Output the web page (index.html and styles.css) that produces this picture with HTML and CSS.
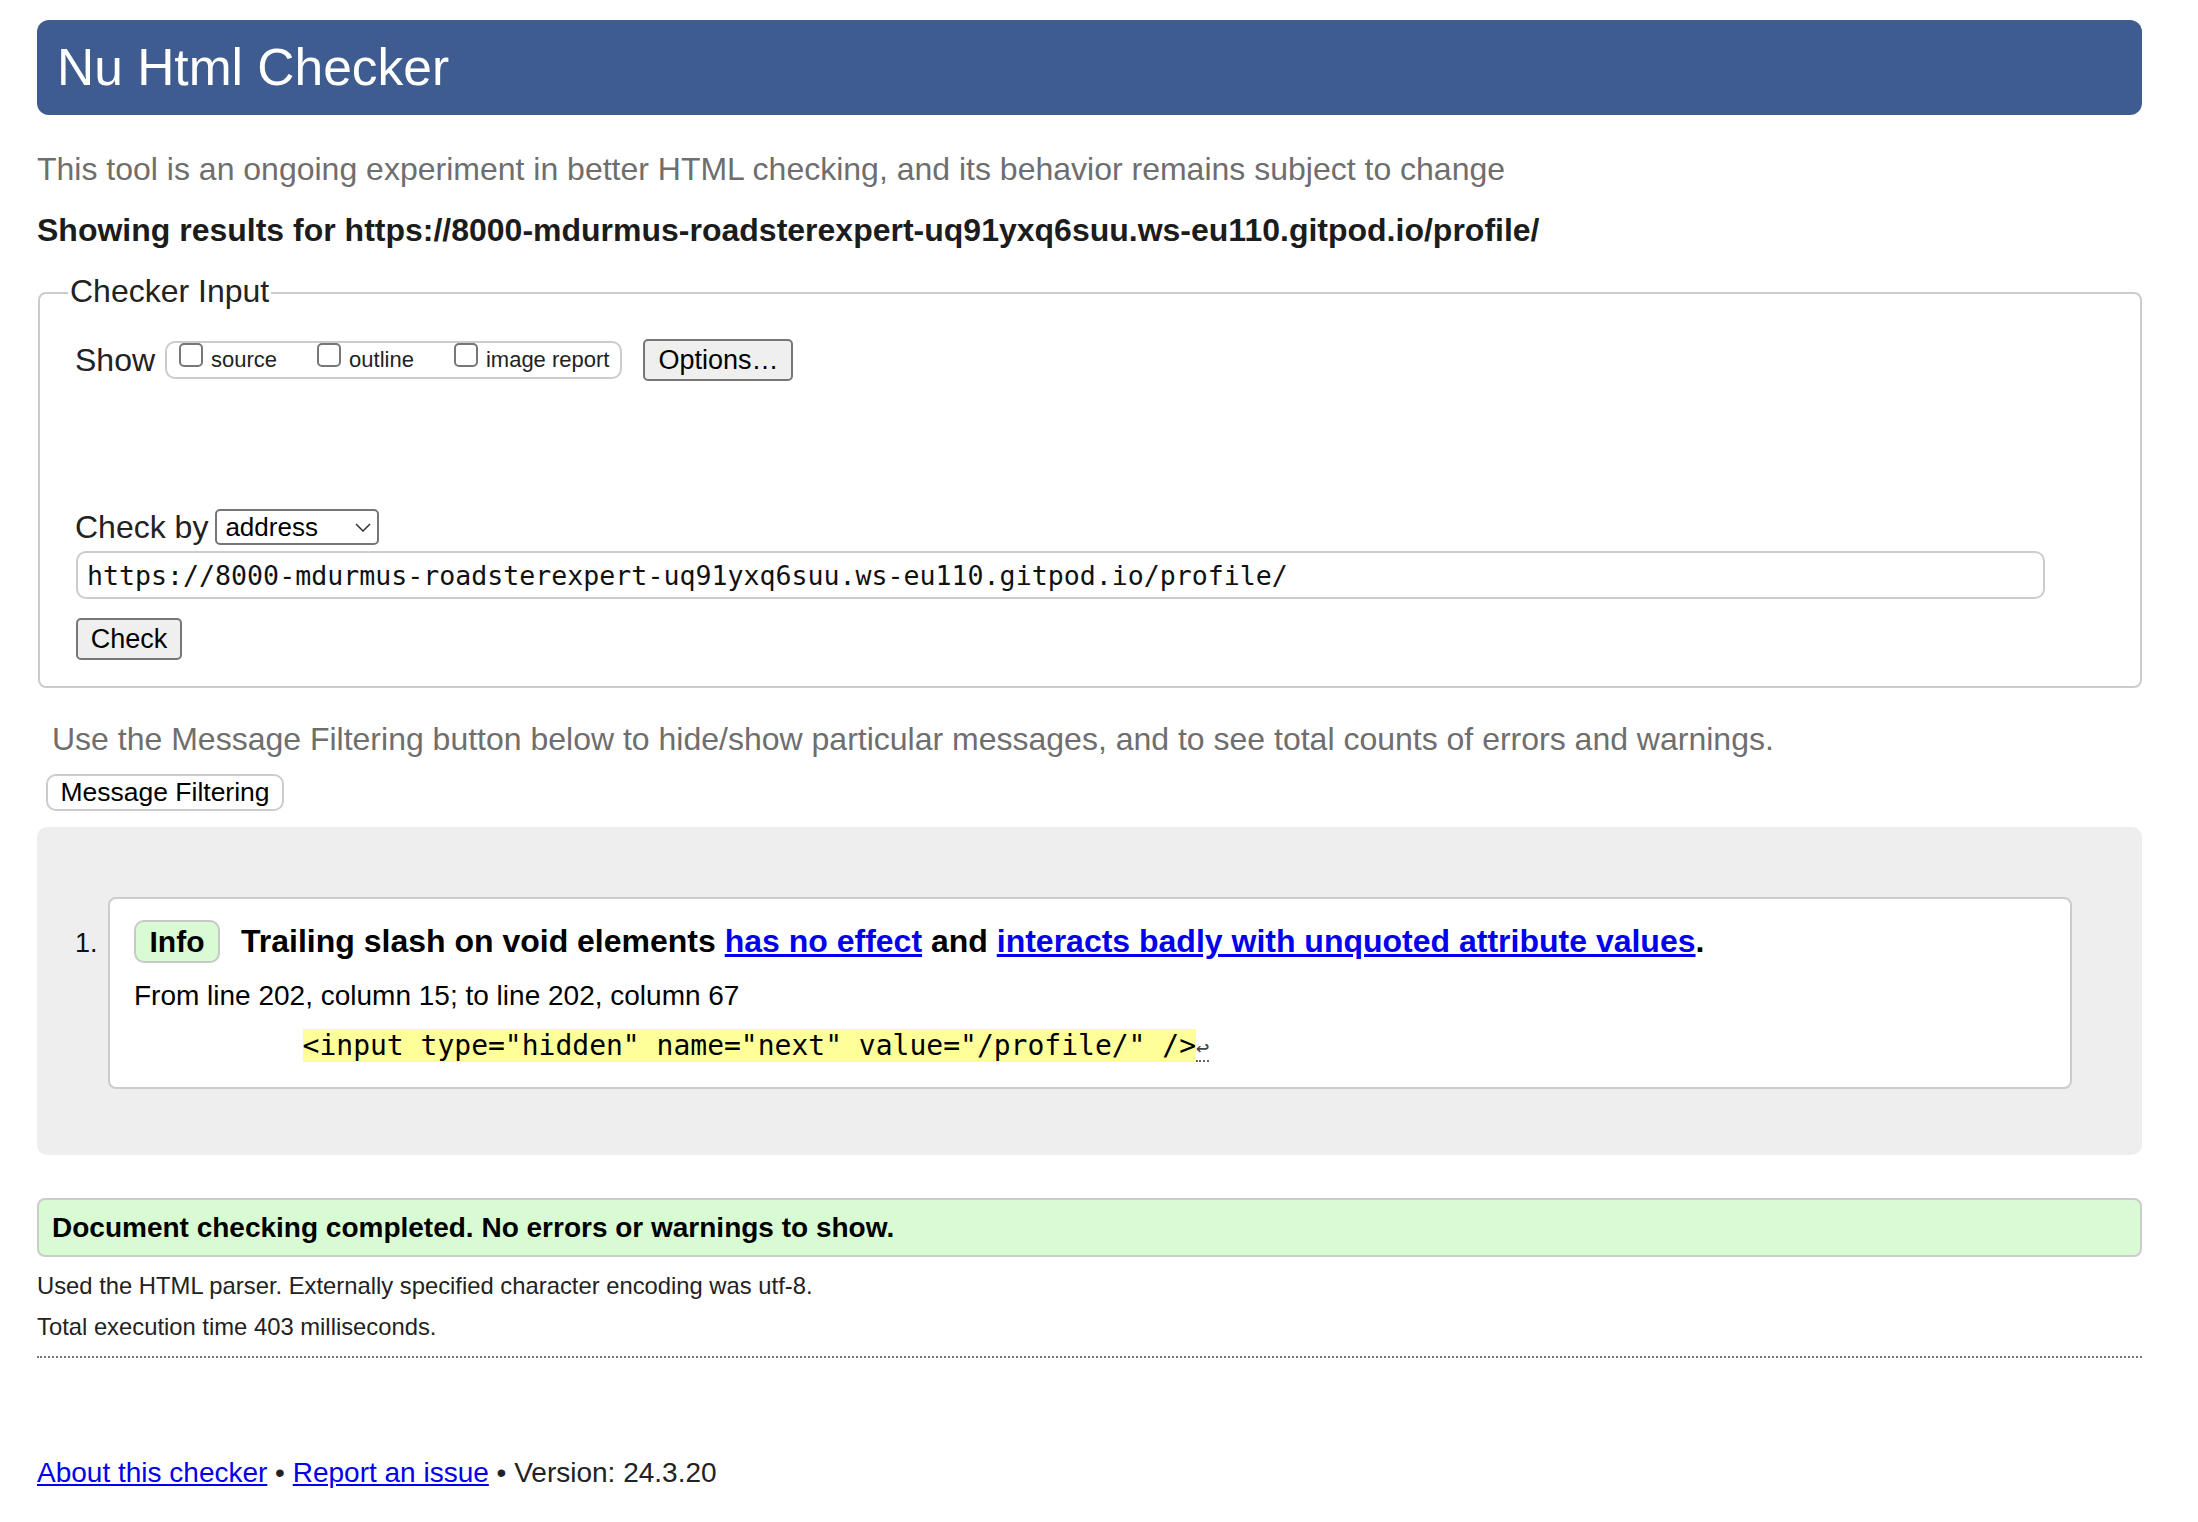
FILE: index.html
```html
<!DOCTYPE html>
<html lang="en">
<head>
<meta charset="utf-8">
<title>Showing results for https://8000-mdurmus-roadsterexpert-uq91yxq6suu.ws-eu110.gitpod.io/profile/ - Nu Html Checker</title>
<link rel="stylesheet" href="styles.css">
</head>
<body>
<h1 class="title">Nu Html Checker</h1>
<p class="intro">This tool is an ongoing experiment in better HTML checking, and its behavior remains subject to change</p>
<p class="showing">Showing results for https://8000-mdurmus-roadsterexpert-uq91yxq6suu.ws-eu110.gitpod.io/profile/</p>
<form class="checker">
<fieldset class="fs">
<legend class="legend">Checker Input</legend>
<div class="row show-row">
<span class="lbl">Show</span>
<span class="group">
<label class="opt"><input type="checkbox" class="cb"><span class="opt-text">source</span></label>
<label class="opt"><input type="checkbox" class="cb"><span class="opt-text">outline</span></label>
<label class="opt"><input type="checkbox" class="cb"><span class="opt-text">image report</span></label>
</span>
<button type="button" class="btn btn-options">Options…</button>
</div>
<div class="row by-row">
<span class="lbl">Check by</span>
<span class="sel-wrap"><select class="sel"><option>address</option></select><svg class="chev" viewBox="0 0 16 9" width="16" height="9"><path d="M1 1 L8 8 L15 1" fill="none" stroke="#333" stroke-width="1.5"/></svg></span>
</div>
<input type="text" class="url" value="https://8000-mdurmus-roadsterexpert-uq91yxq6suu.ws-eu110.gitpod.io/profile/">
<div class="row check-row"><button type="button" class="btn btn-check">Check</button></div>
</fieldset>
</form>
<p class="filter-note">Use the Message Filtering button below to hide/show particular messages, and to see total counts of errors and warnings.</p>
<button type="button" class="mf">Message Filtering</button>
<div class="results">
<ol class="msgs">
<li class="msg">
<span class="num">1.</span>
<div class="msg-box">
<p class="msg-head"><strong class="badge">Info</strong><span class="msg-title">Trailing slash on void elements <a href="#">has no effect</a> and <a href="#">interacts badly with unquoted attribute values</a>.</span></p>
<p class="loc">From line 202, column 15; to line 202, column 67</p>
<p class="extract"><code class="code">          <b class="hl">&lt;input type="hidden" name="next" value="/profile/" /&gt;</b><span class="lf" title="Line break">↩</span></code></p>
</div>
</li>
</ol>
</div>
<p class="success">Document checking completed. No errors or warnings to show.</p>
<p class="meta first">Used the HTML parser. Externally specified character encoding was utf-8.</p>
<p class="meta">Total execution time 403 milliseconds.</p>
<hr class="sep">
<p class="footer"><a href="#">About this checker</a> • <a href="#">Report an issue</a> • Version: 24.3.20</p>
</body>
</html>
```

FILE: styles.css
```css
html, body {
  background: #fff;
}
body {
  margin: 0;
  padding: 20px 56px 40px 37px;
  font-family: "Liberation Sans", Arial, Helvetica, sans-serif;
  color: #222;
}
p { margin: 0; }

.title {
  margin: 0;
  height: 95px;
  box-sizing: border-box;
  padding-left: 20px;
  background: #3e5c8f;
  border-radius: 12px;
  color: #fff;
  font-size: 51.5px;
  font-weight: normal;
  line-height: 95px;
}

.intro {
  margin-top: 34px;
  font-size: 32px;
  line-height: 40px;
  color: #6e6e6e;
}

.showing {
  margin-top: 20.7px;
  font-size: 32px;
  line-height: 40px;
  font-weight: bold;
  color: #1c1c1c;
}

.checker { margin: 0; }

.fs {
  margin: 26.4px 0 0 1px;
  padding: 29px 35px 26px 35px;
  border: 2px solid #ccc;
  border-radius: 8px;
  min-inline-size: 0;
}
.legend {
  margin-left: -7px;
  padding: 0 2px 4px 2px;
  font-size: 32px;
  line-height: 30px;
  color: #222;
}

.row {
  display: flex;
  align-items: center;
}
.lbl {
  font-size: 32px;
  color: #222;
}
.show-row { height: 42px; }
.group {
  display: flex;
  align-items: flex-start;
  height: 38px;
  box-sizing: border-box;
  margin-left: 10px;
  padding: 0 11px 0 12px;
  border: 2px solid #ccc;
  border-radius: 10px;
}
.opt {
  display: flex;
  align-items: flex-start;
}
.opt + .opt { margin-left: 40px; }
.cb {
  appearance: none;
  -webkit-appearance: none;
  margin: 0;
  width: 24px;
  height: 24px;
  box-sizing: border-box;
  border: 2px solid #777;
  border-radius: 5px;
  background: #fff;
}
.opt-text {
  margin-left: 8px;
  font-size: 22px;
  line-height: 34px;
  color: #222;
}

.btn {
  box-sizing: border-box;
  height: 42px;
  padding: 0;
  border: 2px solid #767676;
  border-radius: 5px;
  background: #efefef;
  font-family: "Liberation Sans", Arial, Helvetica, sans-serif;
  font-size: 27px;
  color: #000;
  text-align: center;
}
.btn-options {
  width: 150px;
  margin-left: 21px;
}

.by-row {
  margin-top: 128px;
  height: 36px;
}
.sel-wrap {
  position: relative;
  display: inline-block;
  margin-left: 7px;
}
.sel {
  appearance: none;
  -webkit-appearance: none;
  display: block;
  width: 164px;
  height: 36px;
  box-sizing: border-box;
  margin: 0;
  padding: 0 0 0 8px;
  border: 2px solid #767676;
  border-radius: 5px;
  background: #fff;
  font-family: "Liberation Sans", Arial, Helvetica, sans-serif;
  font-size: 26px;
  color: #000;
}
.chev {
  position: absolute;
  right: 8px;
  top: 14px;
  pointer-events: none;
}

.url {
  display: block;
  width: calc(100% - 61px);
  height: 48px;
  box-sizing: border-box;
  margin: 6px 0 0 1px;
  padding: 0 9px;
  border: 2px solid #ccc;
  border-radius: 10px;
  background: #fff;
  font-family: "DejaVu Sans Mono", "Liberation Mono", monospace;
  font-size: 26.6px;
  color: #111;
}

.check-row { margin-top: 19px; }
.btn-check {
  width: 106px;
  margin-left: 1px;
}

.filter-note {
  margin-top: 31px;
  padding-left: 15px;
  font-size: 32px;
  line-height: 40px;
  color: #6e6e6e;
}

.mf {
  display: block;
  width: 238px;
  height: 37px;
  box-sizing: border-box;
  margin: 15px 0 0 9px;
  padding: 0;
  border: 2px solid #ccc;
  border-radius: 10px;
  background: #fff;
  font-family: "Liberation Sans", Arial, Helvetica, sans-serif;
  font-size: 26.5px;
  color: #000;
}

.results {
  margin-top: 16px;
  padding: 70px 70px 66px 38px;
  background: #eee;
  border-radius: 10px;
}
.msgs {
  margin: 0;
  padding: 0;
  list-style: none;
}
.msg {
  display: grid;
  grid-template-columns: 33px 1fr;
  align-items: start;
}
.num {
  margin-top: 31px;
  font-size: 27px;
  line-height: 30px;
  color: #111;
}
.msg-box {
  padding: 21px 24px 22px 24px;
  border: 2px solid #ccc;
  border-radius: 8px;
  background: #fff;
}
.msg-head {
  display: flex;
  align-items: center;
  height: 43px;
  font-size: 32px;
  font-weight: bold;
  color: #000;
}
.badge {
  display: block;
  flex: none;
  width: 86px;
  height: 43px;
  box-sizing: border-box;
  border: 2px solid #c8c8c8;
  border-radius: 10px;
  background: #d9fbd4;
  font-size: 30px;
  line-height: 39px;
  text-align: center;
}
.msg-title { margin-left: 21px; }
.msg-title a,
.footer a {
  color: #0000ee;
  text-decoration: underline;
}
.loc {
  margin-top: 14.6px;
  font-size: 28px;
  line-height: 36px;
  color: #000;
}
.extract {
  margin-top: 15.4px;
  font-family: "DejaVu Sans Mono", "Liberation Mono", monospace;
  font-size: 28px;
  line-height: 34px;
  white-space: pre;
}
.code {
  font-family: "DejaVu Sans Mono", "Liberation Mono", monospace;
  font-size: 28px;
  color: #000;
}
.hl {
  font-weight: normal;
  background: #ffff99;
}
.lf {
  font-size: 22px;
  color: #444;
  border-bottom: 2px dotted #666;
}

.success {
  margin-top: 43px;
  height: 59px;
  box-sizing: border-box;
  padding-left: 13px;
  border: 2px solid #ccc;
  border-radius: 8px;
  background: #d9fbd4;
  font-size: 28px;
  font-weight: bold;
  line-height: 55px;
  color: #000;
}

.meta {
  margin-top: 10.7px;
  font-size: 23.8px;
  line-height: 30px;
  color: #222;
}
.meta.first { margin-top: 14px; }

.sep {
  margin: 14px 0 0 0;
  height: 0;
  border: 0;
  border-top: 2px dotted #777;
}

.footer {
  margin-top: 97px;
  font-size: 28px;
  line-height: 36px;
  color: #222;
}
```
